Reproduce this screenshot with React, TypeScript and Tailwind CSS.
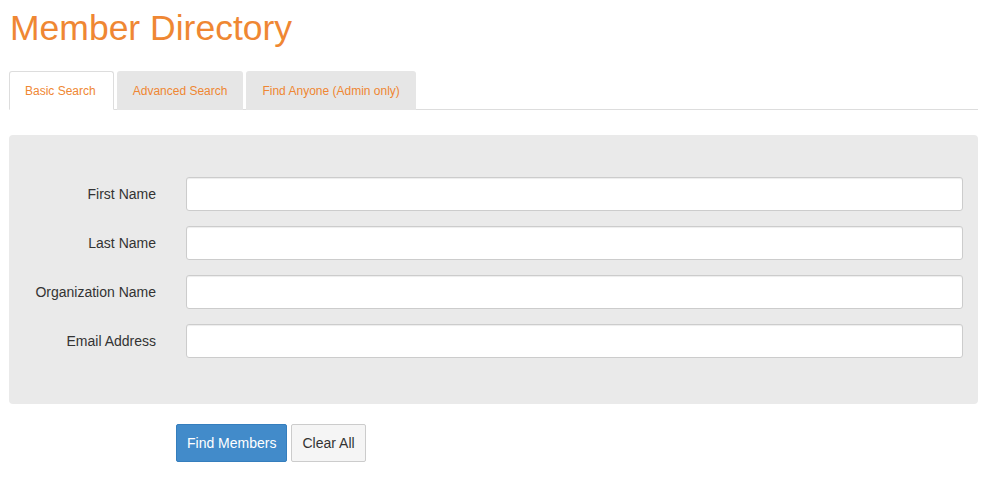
import React from 'react';

const tabs = ['Basic Search', 'Advanced Search', 'Find Anyone (Admin only)'];
const fields = ['First Name', 'Last Name', 'Organization Name', 'Email Address'];

const App: React.FC = () => {
  return (
    <div className="min-h-[499px] bg-white pl-[9px] pr-[22px] pt-[8px]" style={{ fontFamily: '"Liberation Sans", Arial, sans-serif' }}>
      <h1 className="pl-px text-[35.5px] leading-[40px] text-[#ef8733]">Member Directory</h1>

      <div className="mt-[23px] flex gap-[3px] border-b border-[#dddddd]">
        {tabs.map((t, i) => (
          <div
            key={t}
            className={`-mb-px flex h-[39px] items-center rounded-t-[3px] border px-[15px] text-[12px] text-[#ef8733] ${
              i === 0 ? 'border-[#dddddd] border-b-white bg-white pr-[17px]' : 'border-transparent bg-[#e6e6e6]'
            }`}
          >
            {t}
          </div>
        ))}
      </div>

      <div className="mt-[25px] rounded-[4px] bg-[#eaeaea] pt-[42px] pb-[46px] pr-[15px]">
        <div className="flex flex-col gap-[15px]">
          {fields.map((f) => (
            <div key={f} className="flex items-center">
              <label className="w-[147px] text-right text-[14px] text-[#333333]">{f}</label>
              <input
                type="text"
                className="ml-[30px] h-[34px] flex-1 rounded-[3px] border border-[#cccccc] bg-white shadow-[inset_0_1px_1px_rgba(0,0,0,0.075)] outline-none"
              />
            </div>
          ))}
        </div>
      </div>

      <div className="mt-[20px] flex gap-[4px] pl-[167px]">
        <button className="h-[38px] rounded-[2px] border border-[#357ebd] bg-[#428bca] px-[10px] text-[14px] text-white">
          Find Members
        </button>
        <button className="h-[38px] rounded-[2px] border border-[#cccccc] bg-[#f5f5f5] px-[10px] text-[14px] text-[#333333]">
          Clear All
        </button>
      </div>
    </div>
  );
};

export default App;
